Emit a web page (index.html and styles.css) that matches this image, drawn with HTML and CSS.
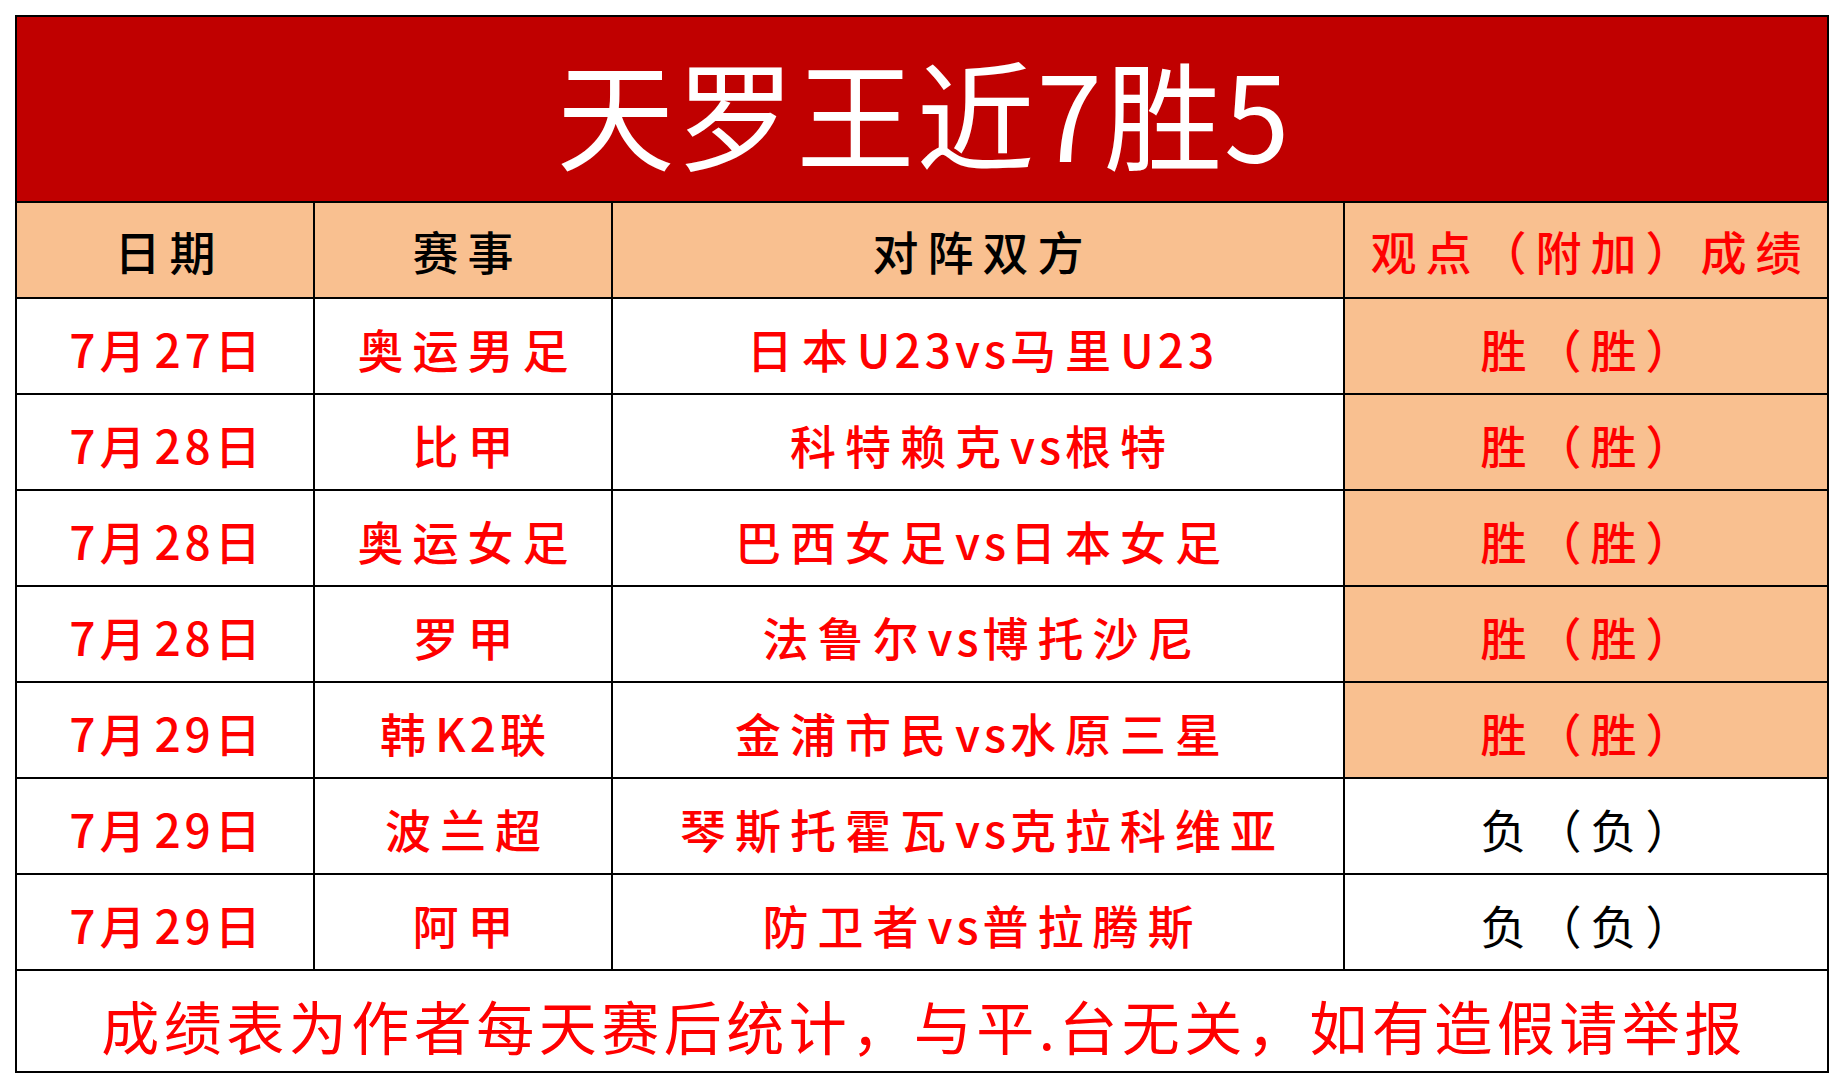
FILE: index.html
```html
<!DOCTYPE html>
<html lang="zh-CN">
<head>
<meta charset="utf-8">
<title>天罗王近7胜5</title>
<link rel="stylesheet" href="styles.css">
</head>
<body>
<div class="sheet">
  <div class="cell title">天罗王近7胜5</div>

  <div class="cell head">日期</div>
  <div class="cell head">赛事</div>
  <div class="cell head">对阵双方</div>
  <div class="cell head red">观点（附加）成绩</div>

  <div class="cell data"><span class="lat">7</span>月<span class="lat">27</span>日</div>
  <div class="cell data">奥运男足</div>
  <div class="cell data">日本<span class="lat">U23vs</span>马里<span class="lat">U23</span></div>
  <div class="cell data peach">胜（胜）</div>

  <div class="cell data"><span class="lat">7</span>月<span class="lat">28</span>日</div>
  <div class="cell data">比甲</div>
  <div class="cell data">科特赖克<span class="lat">vs</span>根特</div>
  <div class="cell data peach">胜（胜）</div>

  <div class="cell data"><span class="lat">7</span>月<span class="lat">28</span>日</div>
  <div class="cell data">奥运女足</div>
  <div class="cell data">巴西女足<span class="lat">vs</span>日本女足</div>
  <div class="cell data peach">胜（胜）</div>

  <div class="cell data"><span class="lat">7</span>月<span class="lat">28</span>日</div>
  <div class="cell data">罗甲</div>
  <div class="cell data">法鲁尔<span class="lat">vs</span>博托沙尼</div>
  <div class="cell data peach">胜（胜）</div>

  <div class="cell data"><span class="lat">7</span>月<span class="lat">29</span>日</div>
  <div class="cell data">韩<span class="lat">K2</span>联</div>
  <div class="cell data">金浦市民<span class="lat">vs</span>水原三星</div>
  <div class="cell data peach">胜（胜）</div>

  <div class="cell data"><span class="lat">7</span>月<span class="lat">29</span>日</div>
  <div class="cell data">波兰超</div>
  <div class="cell data">琴斯托霍瓦<span class="lat">vs</span>克拉科维亚</div>
  <div class="cell data lose">负（负）</div>

  <div class="cell data"><span class="lat">7</span>月<span class="lat">29</span>日</div>
  <div class="cell data">阿甲</div>
  <div class="cell data">防卫者<span class="lat">vs</span>普拉腾斯</div>
  <div class="cell data lose">负（负）</div>

  <div class="cell foot">成绩表为作者每天赛后统计，与平.台无关，如有造假请举报</div>
</div>
</body>
</html>
```

FILE: styles.css
```css
html, body {
  margin: 0;
  padding: 0;
  background: #ffffff;
}

body {
  padding: 15px 0 0 15px;
  font-family: "Noto Sans CJK SC", "Noto Sans", sans-serif;
}

.sheet {
  display: grid;
  width: 1810px;
  grid-template-columns: 296px 296px 730px 482px;
  grid-template-rows: 184px repeat(8, 94px) 100px;
  gap: 2px;
  padding: 2px;
  background: #000000;
}

.cell {
  display: flex;
  align-items: center;
  justify-content: center;
  background: #ffffff;
  white-space: nowrap;
}

.title {
  grid-column: 1 / 5;
  background: #c00000;
  color: #ffffff;
  font-size: 118px;
  letter-spacing: 2px;
  padding-top: 3px;
  padding-left: 4px;
}

.head {
  background: #f9c090;
  color: #000000;
  font-size: 46px;
  font-weight: 500;
  letter-spacing: 9px;
  padding-left: 9px;
}

.head.red {
  color: #ff0000;
}

.data {
  color: #ff0000;
  font-size: 46px;
  font-weight: 500;
  letter-spacing: 9px;
  padding-top: 4px;
  padding-left: 9px;
}

.lat {
  letter-spacing: 4px;
}

.peach {
  background: #f9c090;
}

.lose {
  color: #000000;
  font-weight: 400;
}

.foot {
  grid-column: 1 / 5;
  color: #ff0000;
  font-size: 58px;
  letter-spacing: 4.5px;
  padding-top: 8px;
  padding-left: 4px;
}
```
